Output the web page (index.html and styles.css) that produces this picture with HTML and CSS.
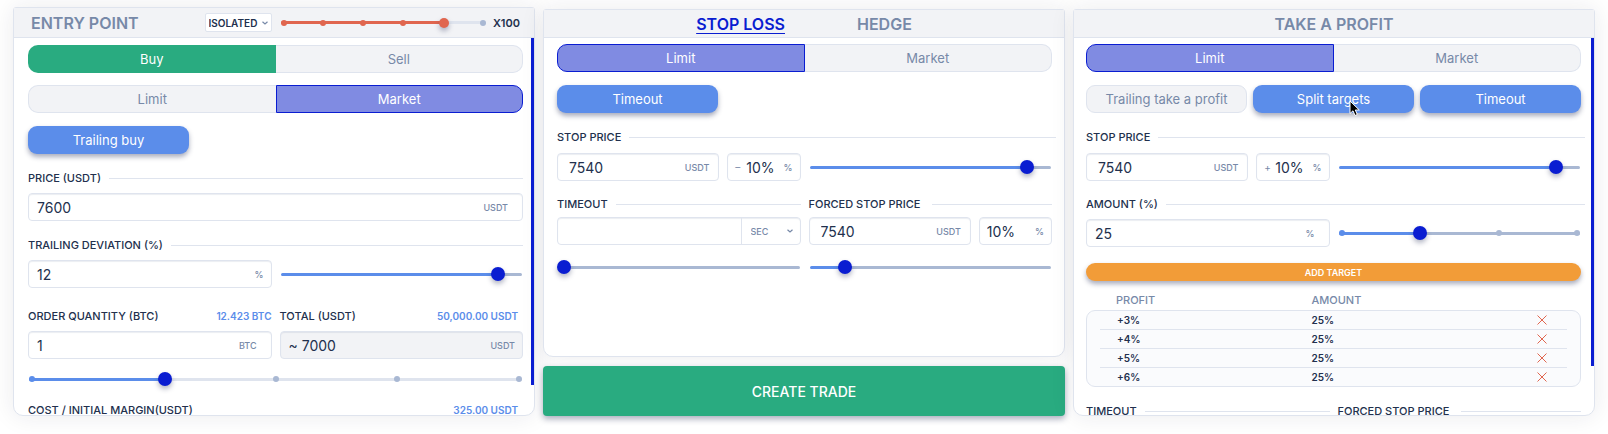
FILE: index.html
```
<!DOCTYPE html>
<html lang="en">
<head>
<meta charset="utf-8">
<title>Create trade</title>
<link rel="stylesheet" href="styles.css">
</head>
<body>
<main class="board">

  <section class="panel panel-entry">
    <header class="panel-head head-split">
      <div class="head-left">
        <h2 class="title">ENTRY POINT</h2>
        <span class="select-wrap mode">
          <select class="mode-select" aria-label="Margin mode"><option>ISOLATED</option></select>
          <svg class="chevron" viewBox="0 0 8 8"><path d="M1.5 2.8 4 5 6.500 2.800"/></svg>
        </span>
      </div>
      <div class="head-right">
        <div class="slider slider-red" style="--v:.81">
          <div class="ticks"><i class="on"></i><i class="on"></i><i class="on"></i><i class="on"></i><i class="on"></i><i></i></div>
          <input type="range" min="0" max="100" value="81" aria-label="Leverage">
        </div>
        <span class="leverage">X100</span>
      </div>
    </header>
    <div class="panel-body">
      <div class="segmented">
        <button class="seg seg-green">Buy</button>
        <button class="seg">Sell</button>
      </div>
      <div class="segmented">
        <button class="seg">Limit</button>
        <button class="seg seg-active">Market</button>
      </div>
      <div class="chips">
        <button class="chip chip-on">Trailing buy</button>
      </div>

      <div class="group">
        <label class="caption ruled" for="price">PRICE (USDT)</label>
        <div class="field"><input id="price" value="7600"><span class="unit unit-in">USDT</span></div>
      </div>

      <div class="group">
        <label class="caption ruled" for="deviation">TRAILING DEVIATION (%)</label>
        <div class="halves">
          <div class="field"><input id="deviation" value="12"><span class="unit">%</span></div>
          <div class="slider" style="--v:.92"><input type="range" value="92" aria-label="Trailing deviation"></div>
        </div>
      </div>

      <div class="group group-far">
        <div class="halves">
          <div class="stack">
            <div class="caption-row"><label class="caption" for="qty">ORDER QUANTITY (BTC)</label><span class="hint">12.423 BTC</span></div>
            <div class="field"><input id="qty" value="1"><span class="unit unit-in">BTC</span></div>
          </div>
          <div class="stack">
            <div class="caption-row caption-inset"><label class="caption" for="total">TOTAL (USDT)</label><span class="hint">50,000.00 USDT</span></div>
            <div class="field field-muted"><input id="total" value="~ 7000" readonly><span class="unit">USDT</span></div>
          </div>
        </div>
      </div>
      <div class="slider slider-pale slider-full" style="--v:.27">
        <div class="ticks"><i class="on"></i><i class="none"></i><i></i><i></i><i></i></div>
        <input type="range" value="27" aria-label="Order quantity">
      </div>
      <div class="caption-row caption-inset"><span class="caption">COST / INITIAL MARGIN(USDT)</span><span class="hint">325.00 USDT</span></div>
      <span class="scroll-thumb scroll-thumb-long"></span>
    </div>
  </section>

  <div class="middle">
    <section class="panel panel-stop">
      <header class="panel-head head-tabs">
        <a class="title tab tab-active" href="#stop">STOP LOSS</a>
        <a class="title tab" href="#hedge">HEDGE</a>
      </header>
      <div class="panel-body">
        <div class="segmented">
          <button class="seg seg-active">Limit</button>
          <button class="seg">Market</button>
        </div>
        <div class="chips">
          <button class="chip chip-on">Timeout</button>
        </div>
        <div class="group group-offset">
          <label class="caption ruled ruled-wide" for="sl-price">STOP PRICE</label>
          <div class="halves">
            <div class="pair">
              <div class="field field-roomy"><input id="sl-price" value="7540"><span class="unit">USDT</span></div>
              <div class="field field-small"><span class="sign">–</span><input aria-label="Stop price percent" value="10%"><span class="unit">%</span></div>
            </div>
            <div class="slider" style="--v:.92"><input type="range" value="92" aria-label="Stop price offset"></div>
          </div>
        </div>
        <div class="halves group">
          <div class="stack stack-tight">
            <label class="caption ruled" for="sl-timeout">TIMEOUT</label>
            <div class="field field-select">
              <input id="sl-timeout" value="">
              <span class="select-wrap seconds">
                <select class="seconds-select" aria-label="Timeout unit"><option>SEC</option></select>
                <svg class="chevron" viewBox="0 0 8 8"><path d="M1.5 2.8 4 5 6.500 2.800"/></svg>
              </span>
            </div>
            <div class="slider slider-below" style="--v:0"><input type="range" value="0" aria-label="Timeout"></div>
          </div>
          <div class="stack stack-tight">
            <label class="caption ruled ruled-gap" for="sl-forced">FORCED STOP PRICE</label>
            <div class="pair">
              <div class="field field-roomy"><input id="sl-forced" value="7540"><span class="unit">USDT</span></div>
              <div class="field field-small"><input aria-label="Forced stop percent" value="10%"><span class="unit">%</span></div>
            </div>
            <div class="slider slider-below" style="--v:.13"><input type="range" value="13" aria-label="Forced stop price"></div>
          </div>
        </div>
      </div>
    </section>
    <button class="create">CREATE TRADE</button>
  </div>

  <section class="panel panel-profit">
    <header class="panel-head head-tabs"><h2 class="title">TAKE A PROFIT</h2></header>
    <div class="panel-body">
      <div class="segmented">
        <button class="seg seg-active">Limit</button>
        <button class="seg">Market</button>
      </div>
      <div class="chips">
        <button class="chip">Trailing take a profit</button>
        <button class="chip chip-on">Split targets
          <svg class="pointer" viewBox="0 0 12 17"><path d="M1 1v12.500l3-2.700 2 4.700 2.300-1-2-4.500h4z"/></svg>
        </button>
        <button class="chip chip-on">Timeout</button>
      </div>
      <div class="group group-offset">
        <label class="caption ruled ruled-wide" for="tp-price">STOP PRICE</label>
        <div class="halves">
          <div class="pair">
            <div class="field field-roomy"><input id="tp-price" value="7540"><span class="unit">USDT</span></div>
            <div class="field field-small"><span class="sign">+</span><input aria-label="Profit percent" value="10%"><span class="unit">%</span></div>
          </div>
          <div class="slider" style="--v:.92"><input type="range" value="92" aria-label="Profit offset"></div>
        </div>
      </div>
      <div class="group">
        <label class="caption ruled ruled-wide" for="tp-amount">AMOUNT (%)</label>
        <div class="halves">
          <div class="field"><input id="tp-amount" value="25"><span class="unit unit-in">%</span></div>
          <div class="slider" style="--v:.33">
            <div class="ticks"><i class="on"></i><i></i><i></i><i></i></div>
            <input type="range" value="33" aria-label="Amount">
          </div>
        </div>
      </div>
      <button class="add">ADD TARGET</button>
      <table class="targets">
        <thead><tr><th>PROFIT</th><th>AMOUNT</th><th aria-label="Remove"></th></tr></thead>
        <tbody>
          <tr><td>+3%</td><td>25%</td><td><button class="remove" aria-label="Remove +3%"><svg viewBox="0 0 10 10"><path d="M.5.5l9 9M9.500.5l-9 9"/></svg></button></td></tr>
          <tr><td>+4%</td><td>25%</td><td><button class="remove" aria-label="Remove +4%"><svg viewBox="0 0 10 10"><path d="M.5.5l9 9M9.500.5l-9 9"/></svg></button></td></tr>
          <tr><td>+5%</td><td>25%</td><td><button class="remove" aria-label="Remove +5%"><svg viewBox="0 0 10 10"><path d="M.5.5l9 9M9.500.5l-9 9"/></svg></button></td></tr>
          <tr><td>+6%</td><td>25%</td><td><button class="remove" aria-label="Remove +6%"><svg viewBox="0 0 10 10"><path d="M.5.5l9 9M9.500.5l-9 9"/></svg></button></td></tr>
        </tbody>
      </table>
      <div class="halves">
        <span class="caption ruled">TIMEOUT</span>
        <span class="caption ruled ruled-gap">FORCED STOP PRICE</span>
      </div>
      <span class="scroll-thumb"></span>
    </div>
  </section>

</main>
</body>
</html>
```
FILE: styles.css
```
:root {
  --ink: #22304d;
  --slate: #7789a8;
  --mist: #a9b8d3;
  --line: #dfe4ee;
  --wash: #f2f3f6;
  --sky: #5b8dea;
  --blue: #0a1dd1;
  --violet: #808be2;
  --green: #29ab80;
  --red: #e0664f;
}

* { box-sizing: border-box; }

body {
  margin: 0;
  background: #fff;
  color: var(--ink);
  font-family: Inter, "Liberation Sans", sans-serif;
  font-size: 14px;
}

button, input, select { font: inherit; color: inherit; margin: 0; }
button { cursor: pointer; }

.board {
  display: grid;
  grid-template-columns: repeat(3, minmax(0, 1fr));
  gap: 8px;
  height: 100vh;
  padding: 7px 13px 18px;
  overflow: hidden;
}

.panel {
  display: flex;
  flex-direction: column;
  min-height: 0;
  background: #fff;
  border: 1px solid var(--line);
  border-radius: 3px 3px 10px 10px;
  box-shadow: 0 0 24px rgba(30, 35, 50, .09);
}

.middle {
  display: flex;
  flex-direction: column;
  gap: 9px;
  min-height: 0;
  margin-top: 2px;
}
.panel-stop { flex: 1; }
.panel-profit { margin-top: 2px; }

.panel-head {
  flex: none;
  background: var(--wash);
  border-bottom: 1px solid var(--line);
  height: 28px;
}
.panel-entry .panel-head { height: 30px; }

.head-split {
  display: grid;
  grid-template-columns: 1fr 1fr;
  gap: 8px;
  padding: 0 11px 0 14px;
}
.head-left { display: flex; align-items: center; justify-content: space-between; padding-left: 3px; }
.head-right { display: flex; align-items: center; gap: 6px; padding-right: 3px; }
.head-right .slider { flex: 1; }

.head-tabs { display: flex; align-items: center; justify-content: center; gap: 72px; }

.title {
  margin: 0;
  font-size: 16px;
  font-weight: 600;
  line-height: 20px;
  color: var(--slate);
  text-decoration: none;
  white-space: nowrap;
}
.tab-active { color: var(--blue); text-decoration: underline; text-decoration-thickness: 1px; text-underline-offset: 3px; }

.select-wrap { position: relative; display: flex; align-items: center; }
.select-wrap select { appearance: none; border: 0; background: transparent; outline: 0; padding: 0; width: 100%; }
.chevron {
  position: absolute;
  right: 2px;
  width: 8px;
  height: 8px;
  fill: none;
  stroke: var(--slate);
  stroke-width: 1.200;
  pointer-events: none;
}
.mode { width: 67px; height: 19px; background: #fff; border: 1px solid var(--line); border-radius: 2px; }
.select-wrap .mode-select { padding-left: 3px; font-size: 10px; font-weight: 600; }
.leverage { font-size: 11px; font-weight: 600; }

.panel-body {
  position: relative;
  display: flex;
  flex-direction: column;
  flex: 1;
  min-height: 0;
  overflow: hidden;
  padding: 6px 12px 0 13px;
  border-radius: 0 0 10px 10px;
}
.panel-entry .panel-body { padding: 7px 11px 0 14px; }
.panel-profit .panel-body { padding: 6px 13px 0 12px; }
.panel-body > * { flex: none; }

.segmented { display: grid; grid-template-columns: 1fr 1fr; height: 28px; margin-bottom: 12px; }
.seg { background: var(--wash); border: 1px solid var(--line); color: var(--slate); padding: 0; font-size: 13px; }
.seg:first-child { border-radius: 10px 0 0 10px; border-right: 0; }
.seg:last-child { border-radius: 0 10px 10px 0; border-left: 0; }
.segmented .seg-active { background: var(--violet); border: 1px solid var(--blue); color: #fff; }
.segmented .seg-green { background: var(--green); border: 0; color: #fff; }

.chips { display: grid; grid-template-columns: repeat(3, 1fr); gap: 6px; margin-top: 1px; }
.chip {
  position: relative;
  height: 28px;
  padding: 0;
  border: 1px solid var(--line);
  border-radius: 9px;
  background: var(--wash);
  color: var(--slate);
  font-size: 13px;
  white-space: nowrap;
}
.chip-on { background: var(--sky); border: 0; color: #fff; box-shadow: 0 3px 5px rgba(40, 50, 90, .4); }
.pointer { position: absolute; left: 96px; top: 15px; width: 12px; height: 17px; fill: #000; stroke: #fff; stroke-width: 1; }

.group { margin-top: 16px; }
.group-far { margin-top: 20px; }

.caption { display: block; font-size: 11px; font-weight: 500; line-height: 16px; white-space: nowrap; }
.ruled { display: flex; align-items: center; gap: 8px; }
.ruled::after { content: ""; flex: 1; height: 1px; background: var(--line); }
.ruled-wide { margin-right: -4px; }
.ruled-gap { gap: 12px; }
.group > .caption { margin-bottom: 7px; }
.group-offset > .caption { margin-bottom: 8px; }
.group-offset + .group { margin-top: 15px; }
.caption-row { display: flex; justify-content: space-between; }
.caption-inset { padding-right: 5px; }
.hint { color: var(--sky); font-size: 10px; font-weight: 600; line-height: 16px; }

.halves { display: grid; grid-template-columns: minmax(0, 1fr) minmax(0, 1fr); gap: 8px; align-items: center; }
.stack { display: grid; gap: 7px; }
.stack-tight { gap: 5px; }
.pair { display: grid; grid-template-columns: minmax(0, 162fr) minmax(0, 73fr); gap: 8px; }

.field {
  display: flex;
  align-items: center;
  height: 28px;
  padding: 0 7px 0 8px;
  border: 1px solid var(--line);
  border-radius: 4px;
  background: #fff;
  box-shadow: inset 0 1px 1px rgba(120, 137, 168, .15);
}
.field input { flex: 1; width: 100%; min-width: 0; padding: 0; border: 0; outline: 0; background: transparent; }
.field-muted { background: var(--wash); }
.field-roomy { padding: 0 9px 0 11px; }
.field-small { padding: 0 7px; }
.unit { font-size: 9px; font-weight: 500; color: var(--slate); }
.unit-in { padding-right: 7px; }
.sign { font-size: 10px; color: var(--slate); width: 11px; }
.field-select { padding-right: 0; }
.seconds { width: 59px; height: 26px; border-left: 1px solid var(--line); }
.select-wrap .seconds-select { padding-left: 9px; font-size: 9px; font-weight: 500; color: var(--slate); height: 100%; }
.seconds .chevron { right: 6px; }

.slider {
  --rest: var(--mist);
  --fill: var(--sky);
  --knob: var(--blue);
  --size: 14px;
  position: relative;
  display: flex;
  align-items: center;
  height: 14px;
}
.slider::before {
  content: "";
  position: absolute;
  left: 1px;
  right: 1px;
  height: 3px;
  border-radius: 2px;
  background:
    linear-gradient(var(--fill), var(--fill)) 0 0 / calc(7px + (100% - 14px) * var(--v)) 100% no-repeat,
    var(--rest);
}
.slider input { position: relative; appearance: none; width: 100%; height: 14px; margin: 0; background: transparent; }
.slider input::-webkit-slider-thumb {
  appearance: none;
  width: var(--size);
  height: var(--size);
  border-radius: 50%;
  background: var(--knob);
  box-shadow: 0 3px 5px rgba(40, 50, 90, .35);
}
.slider-pale { --rest: var(--line); }
.slider-red { --rest: var(--line); --fill: var(--red); --knob: var(--red); --size: 10px; }
.slider-full { margin: 13px 0 16px; }
.slider-below { margin-top: 10px; }
.ticks { position: absolute; left: 1px; right: 1px; display: flex; justify-content: space-between; }
.ticks i { width: 6px; height: 6px; border-radius: 50%; background: var(--mist); }
.ticks .on { background: var(--fill); }
.ticks .none { background: transparent; }

.scroll-thumb { position: absolute; top: 0; right: 0; width: 3px; height: 87%; background: var(--blue); }
.scroll-thumb-long { height: 92%; }

.create {
  flex: none;
  height: 50px;
  border: 0;
  border-radius: 4px;
  background: var(--green);
  color: #fff;
  font-size: 14px;
  font-weight: 500;
  box-shadow: 0 3px 6px rgba(40, 50, 90, .4);
}

.add {
  height: 18px;
  margin: 16px 0 10px;
  padding: 0;
  border: 0;
  border-radius: 9px;
  background: #f29c38;
  color: #fff;
  font-size: 9px;
  font-weight: 600;
  box-shadow: 0 3px 5px rgba(40, 50, 90, .4);
}

.targets { display: block; margin-bottom: 16px; font-size: 10px; font-weight: 600; line-height: 18px; }
.targets thead, .targets tbody { display: block; }
.targets tr { display: grid; grid-template-columns: 195fr 225fr 48fr; }
.targets th { text-align: left; font-size: 11px; font-weight: 500; color: var(--slate); line-height: 18px; }
.targets th, .targets td { padding: 0 0 0 17px; }
.targets thead { padding: 0 13px; margin-bottom: 1px; }
.targets tbody { padding: 0 13px; border: 1px solid var(--line); border-radius: 9px; background: #fafbfd; }
.targets tbody tr + tr { border-top: 1px solid var(--line); }
.targets td:last-child { padding-left: 18px; }
.remove { display: flex; align-items: center; height: 18px; padding: 0; border: 0; background: transparent; }
.remove svg { width: 10px; height: 10px; fill: none; stroke: var(--red); stroke-width: 1; }
```
